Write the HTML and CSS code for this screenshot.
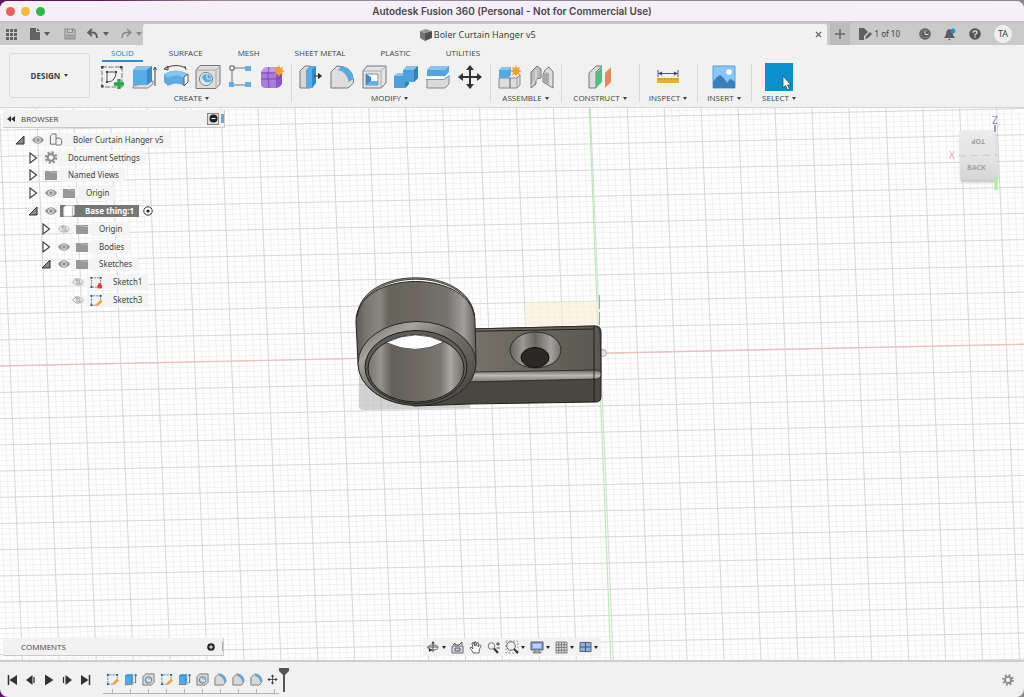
FILE: index.html
```html
<!DOCTYPE html>
<html lang="en">
<head>
<meta charset="utf-8">
<title>Autodesk Fusion 360</title>
<link rel="stylesheet" href="styles.css">
</head>
<body>
<svg class="sprite" aria-hidden="true">
  <symbol id="eye" viewBox="0 0 12 8"><path d="M0 4Q6-3.500 12 4Q6 11.500 0 4Z" fill="#969696"/><circle cx="6" cy="4" r="2.400" fill="none" stroke="#f4f4f4" stroke-width=".9"/></symbol>
  <symbol id="eye-off" viewBox="0 0 12 8"><path d="M.5 4Q6-2.500 11.500 4Q6 10.500 .5 4Z" fill="none" stroke="#a5a5a5" stroke-width=".9"/><circle cx="6" cy="4" r="2" fill="none" stroke="#a5a5a5" stroke-width=".9"/><path d="M2.500 .5L9 7.500M4 .2L10.500 7" stroke="#a5a5a5" stroke-width=".8"/></symbol>
  <symbol id="folder" viewBox="0 0 12 10"><path d="M0 1h5l1 1.500V1H12v9H0Z" fill="#989898"/><path d="M6 1.200l1 1.300h5" stroke="#c4c4c4" stroke-width=".7" fill="none"/></symbol>
  <symbol id="closed" viewBox="0 0 10 12"><path d="M2 1L8.500 6L2 11Z" fill="#fff" stroke="#444" stroke-width="1.200"/></symbol>
  <symbol id="open" viewBox="0 0 10 10"><path d="M9 1V9H1Z" fill="#888" stroke="#333" stroke-width="1"/></symbol>
  <symbol id="gear" viewBox="0 0 12 12"><circle cx="6" cy="6" r="4.800" fill="none" stroke="#8d8d8d" stroke-width="2" stroke-dasharray="1.900 1.870"/><circle cx="6" cy="6" r="3.100" fill="none" stroke="#8d8d8d" stroke-width="1.900"/></symbol>
  <symbol id="sketch" viewBox="0 0 14 14"><path d="M2 2H12V12H2Z" fill="none" stroke="#777" stroke-dasharray="2 1"/><path d="M1 1h2v2H1zM11 1h2v2h-2zM1 11h2v2H1z" fill="#356"/></symbol>
  <symbol id="sketch-pen" viewBox="0 0 14 14"><path d="M8 12H2V2H12V6" fill="none" stroke="#4d87b5" stroke-dasharray="2.500 1"/><path d="M1 1h2v2H1zM11 1h2v2h-2zM1 11h2v2H1z" fill="#356"/><path d="M7 13l1-3 4-4 2 2-4 4Z" fill="#eda142"/></symbol>
  <symbol id="t-extrude" viewBox="0 0 14 14"><path d="M1 3L3 1H10V10L8 12H1Z" fill="#58a8df"/><path d="M1 3H8V12" fill="none" stroke="#2e80b9" stroke-width=".7"/><path d="M1 12.500H9L11 10" stroke="#777" fill="none"/><path d="M12.500 2V11M11.300 3.200L12.500 1.200L13.700 3.200" stroke="#444" fill="none" stroke-width=".8"/></symbol>
  <symbol id="t-hole" viewBox="0 0 14 14"><path d="M1 4L4 1H13V10L10 13H1Z" fill="#d8d8d8" stroke="#777"/><circle cx="7" cy="7.500" r="3.500" fill="#a9cde6" stroke="#567" stroke-width=".8"/><path d="M5 6Q7 10 10 8.500" fill="none" stroke="#fff"/></symbol>
  <symbol id="t-fillet" viewBox="0 0 14 14"><path d="M1 13V5L5 1Q12 1 13 9L10 13Z" fill="#d9d9d9" stroke="#777"/><path d="M6 1.500Q12 2 13 9L11 10Q10.500 5 5 3Z" fill="#5ba9de"/></symbol>
  <symbol id="move" viewBox="0 0 26 26"><path d="M13 4V22M4 13H22" stroke="#333" stroke-width="2"/><path d="M13 1L17 6H9ZM13 25L17 20H9ZM1 13L6 9V17ZM25 13L20 9V17Z" fill="#333"/></symbol>
  <symbol id="star" viewBox="0 0 12 12"><path d="M6 0L7.200 3L10.200 1.800L9 4.800L12 6L9 7.200L10.200 10.200L7.200 9L6 12L4.800 9L1.800 10.200L3 7.200L0 6L3 4.800L1.800 1.800L4.800 3Z" fill="#f0a32c"/></symbol>
</svg>

<div class="window">
  <header class="titlebar">
    <div class="lights"><button class="light red" aria-label="Close"></button><button class="light amber" aria-label="Minimize"></button><button class="light green" aria-label="Zoom"></button></div>
    <h1 class="title">Autodesk Fusion 360 (Personal - Not for Commercial Use)</h1>
  </header>

  <div class="docbar">
    <div class="quick">
      <button class="q" aria-label="Data panel"><svg width="12" height="12" viewBox="0 0 12 12"><path d="M1 1h3v3H1zM5 1h3v3H5zM9 1h3v3H9zM1 5h3v3H1zM5 5h3v3H5zM9 5h3v3H9zM1 9h3v3H1zM5 9h3v3H5zM9 9h3v3H9z" fill="#626262"/></svg></button>
      <button class="q file" aria-label="File"><svg width="10" height="12" viewBox="0 0 10 12"><path d="M0 0H6V4H10V12H0ZM7 0L10 3H7Z" fill="#626262"/></svg><i class="caret"></i></button>
      <button class="q save" aria-label="Save"><svg width="12" height="12" viewBox="0 0 12 12"><path d="M1 1H9.500L11 2.500V11H1ZM3.500 1V4.500H8.500V1M3 11V7H9V11M5 7V11M7 7V11" fill="none" stroke="#8a8a8a" stroke-width="1.200"/></svg></button>
      <button class="q" aria-label="Undo"><svg width="12" height="12" viewBox="0 0 12 12"><path d="M5 1L1 4.500L5 8M1.500 4.500H6Q10 5 10 10" fill="none" stroke="#5e5e5e" stroke-width="1.800"/></svg><i class="caret"></i></button>
      <button class="q dim" aria-label="Redo"><svg width="12" height="12" viewBox="0 0 12 12"><path d="M7 1L11 4.500L7 8M10.500 4.500H6Q2 5 2 10" fill="none" stroke="#5e5e5e" stroke-width="1.400"/></svg><i class="caret"></i></button>
    </div>
    <div class="doctab">
      <svg width="12" height="12" viewBox="0 0 12 12"><path d="M0 2L6 0L12 2L5 4Z" fill="#999"/><path d="M0 2L5 4V12L0 9Z" fill="#777"/><path d="M5 4L12 2V9L5 12Z" fill="#505050"/></svg>
      <span>Boler Curtain Hanger v5</span>
      <button class="close" aria-label="Close document"><svg width="7" height="7" viewBox="0 0 7 7"><path d="M1 1L6 6M6 1L1 6" stroke="#666" stroke-width="1.200"/></svg></button>
    </div>
    <button class="plus" aria-label="New design"><svg width="10" height="10" viewBox="0 0 10 10"><path d="M5 0V10M0 5H10" stroke="#777" stroke-width="2"/></svg></button>
    <div class="account">
      <button class="count"><svg width="13" height="12" viewBox="0 0 13 12"><path d="M0 0H5L9 4L5 8V12H0Z" fill="#606060"/><path d="M6 11L7 8L11 4L13 6L9 10Z" fill="#606060"/></svg>1 of 10</button>
      <button class="q" aria-label="Job status"><svg width="12" height="12" viewBox="0 0 12 12"><circle cx="6" cy="6" r="5.800" fill="#5c5c5c"/><circle cx="6" cy="6" r="4" fill="none" stroke="#999" stroke-width=".6"/><path d="M6 3V6.500H9" stroke="#ddd" fill="none"/></svg></button>
      <button class="q" aria-label="Notifications"><svg width="12" height="13" viewBox="0 0 12 13"><path d="M5 1Q9 2 9 7L11 10H0L2 7Q2 2 5 1ZM4 11H7L5.500 12.500Z" fill="#5c5c5c"/><circle cx="9" cy="3" r="2.400" fill="#2292c8"/></svg></button>
      <button class="q" aria-label="Help"><svg width="12" height="12" viewBox="0 0 12 12"><circle cx="6" cy="6" r="5.800" fill="#565656"/><path d="M4 4.800Q4 2.800 6 2.800T8 4.600Q8 5.500 6.800 6Q6 6.500 6 7.400M6 8.300V9.500" stroke="#e4e4e4" stroke-width="1.300" fill="none"/></svg></button>
      <button class="avatar">TA</button>
    </div>
  </div>

  <div class="ribbon">
    <button class="workspace">DESIGN <i class="caret"></i></button>
    <div class="tools">
      <nav class="tabs">
        <button class="tab active">SOLID</button><button class="tab">SURFACE</button><button class="tab">MESH</button><button class="tab">SHEET METAL</button><button class="tab">PLASTIC</button><button class="tab">UTILITIES</button>
      </nav>
      <div class="groups">
        <section class="group create">
          <div class="icons">
            <button class="tool" aria-label="Create sketch"><svg viewBox="0 0 26 26"><path d="M3 3H23V23H3Z" fill="none" stroke="#555" stroke-dasharray="5 1.500" stroke-width=".8"/><path d="M8 8H17Q17 17 9 18H8Z" fill="none" stroke="#555" stroke-width="1"/><path d="M2 2h2.500v2.500H2zM21 2h2.500v2.500H21zM2 21h2.500v2.500H2zM7 7h2v2H7zM16 7h2v2h-2zM7 17h2v2H7z" fill="#444"/><path d="M20 15V25M15 20H25" stroke="#2ba44f" stroke-width="3.400"/></svg></button>
            <button class="tool" aria-label="Extrude"><svg viewBox="0 0 26 26"><path d="M2 22V24H17L22 20V17Z" fill="#ddd" stroke="#888"/><path d="M2 6L6 2H21V17L16 21H2Z" fill="#5babe4"/><path d="M2 6L6 2H21L16 6Z" fill="#86c3ed"/><path d="M16 6L21 2V17L16 21Z" fill="#3e8dc8"/><path d="M24 4V22M22.500 6L24 3L25.500 6" fill="none" stroke="#444"/></svg></button>
            <button class="tool" aria-label="Revolve"><svg viewBox="0 0 26 26"><path d="M1 10Q13 3 25 10L22 22Q13 17 5 22L1 18Z" fill="#5dabe2"/><path d="M1 10Q13 3 25 10L22 14Q13 9 5 14Z" fill="#87c5ee"/><path d="M21 13L25 10V18L21 22Z" fill="#fff" stroke="#555"/><path d="M3 4Q13-1 23 4M1 5L5 2V6ZM23 6L22 2" fill="none" stroke="#444"/></svg></button>
            <button class="tool" aria-label="Hole"><svg viewBox="0 0 26 26"><path d="M1 6L5 1.500H25V20L21 24.500H1Z" fill="#dedede" stroke="#777"/><path d="M1 6H21V24M21 6L25 2" fill="none" stroke="#aaa"/><circle cx="11" cy="15" r="6.500" fill="#f5f5f5" stroke="#777"/><circle cx="11.500" cy="15" r="5" fill="#5ca8dc"/><path d="M7 13Q10 21 16 17L15 19Q10 22 7 18Z" fill="#d4eaf8"/><path d="M12 10V15H16" fill="none" stroke="#cde5f5"/></svg></button>
            <button class="tool" aria-label="Pattern"><svg viewBox="0 0 26 26"><path d="M5 6V19M7 4H19M7 21H19" stroke="#666" stroke-width=".9"/><path d="M3 2h4v4H3z" fill="#fff" stroke="#555"/><path d="M18 2h6v5h-6zM2 18h5v5H2zM18 18h6v5h-6z" fill="#65aede"/></svg></button>
            <button class="tool" aria-label="Create form"><svg viewBox="0 0 26 26"><path d="M2 9Q3 4 8 3H19Q23 5 23 9V19Q22 23 17 24H7Q3 24 2 21Z" fill="#a97bdc"/><path d="M2 9Q3 4 8 3H19L16 8H4Z" fill="#c19ae9"/><path d="M17 8Q23 6 23 9V19Q22 23 17 24Z" fill="#8756c0"/><path d="M10 3Q8 8 10 24M2 15H17L23 12M2 9H17" stroke="#6f42a5" fill="none" stroke-width=".8"/><use href="#star" x="14" y="1" width="12" height="12"/></svg></button>
          </div>
          <button class="glabel">CREATE <i class="caret"></i></button>
        </section>
        <section class="group modify">
          <div class="icons">
            <button class="tool" aria-label="Press pull"><svg viewBox="0 0 26 26"><path d="M3 7L8 2H13V24H3Z" fill="#d9d9d9" stroke="#777"/><path d="M9 6L13 2H19V19L15 24H9Z" fill="#5babe3"/><path d="M15 6L19 2V19L15 24Z" fill="#378ac6"/><path d="M17 12H23M21.500 9.500L24.500 12L21.500 14.500Z" stroke="#333" fill="#333"/></svg></button>
            <button class="tool" aria-label="Fillet"><svg viewBox="0 0 26 26"><path d="M2 24V8L8 2Q23 2 24.500 16V19L19 24Z" fill="#dedede" stroke="#777"/><path d="M12 2.500Q23 3 24.500 15L19.500 18Q18 8 9 6Z" fill="#5baae2"/></svg></button>
            <button class="tool" aria-label="Shell"><svg viewBox="0 0 26 26"><path d="M2 7L6 2H25V19L20 24H2Z" fill="#e5e5e5" stroke="#777"/><path d="M2 7H20V24M20 7L25 2" stroke="#aaa" fill="none"/><path d="M5 10H17V21H5Z" fill="#fff" stroke="#888"/><path d="M5 10L10 13V18L5 21Z" fill="#3f8cc8"/><path d="M10 17H17V21H5Z" fill="#65b2e6"/></svg></button>
            <button class="tool" aria-label="Combine"><svg viewBox="0 0 26 26"><path d="M1 12L5 9H10V6L14 2H25V14L21 18H16V20L12 24H1Z" fill="#4f9fd9"/><path d="M10 6L14 2H25L21 6ZM1 12L5 9H10V12Z" fill="#86c4ee"/><path d="M21 6L25 2V14L21 18ZM12 18H16V20L12 24Z" fill="#347fb9"/></svg></button>
            <button class="tool" aria-label="Split body"><svg viewBox="0 0 26 26"><path d="M2 15H20L24 12V20L20 24H2Z" fill="#dadada" stroke="#888"/><path d="M2 6L6 2H24V8L20 12H2Z" fill="#54a4df"/><path d="M2 6L6 2H24L20 6Z" fill="#87c4ee"/><path d="M1 14.500H19L25 10" fill="none" stroke="#fff" stroke-width="2"/><path d="M1 15.500H19L25 11" fill="none" stroke="#6ba4ca"/></svg></button>
            <button class="tool" aria-label="Move"><svg viewBox="0 0 26 26"><use href="#move"/></svg></button>
          </div>
          <button class="glabel">MODIFY <i class="caret"></i></button>
        </section>
        <section class="group assemble">
          <div class="icons">
            <button class="tool" aria-label="New component"><svg viewBox="0 0 26 26"><path d="M2 14H13V24H2ZM13 14H20L23 11V21L20 24H13Z" fill="#ddd" stroke="#888"/><path d="M20 14V24" stroke="#999"/><path d="M2 6L5 3H14V11L12 14H2Z" fill="#58a8e2"/><path d="M2 6L5 3H14L12 6Z" fill="#89c6ef"/><use href="#star" x="13" y="1" width="12" height="12"/></svg></button>
            <button class="tool" aria-label="Joint"><svg viewBox="0 0 26 26"><path d="M2 8L8 2L12 5V14L7 15V20L2 24Z" fill="#bbb" stroke="#777"/><path d="M7 6V15L2 22" fill="none" stroke="#eee"/><path d="M14 11L16 6L20 3L24 8V24L19 21L14 18Z" fill="#ddd" stroke="#777"/><path d="M14 11L18 8L20 10V20L14 18Z" fill="#a9a9a9"/></svg></button>
          </div>
          <button class="glabel">ASSEMBLE <i class="caret"></i></button>
        </section>
        <section class="group construct">
          <div class="icons"><button class="tool" aria-label="Offset plane"><svg viewBox="0 0 26 26"><path d="M2 9L9 2H15L9 8V24H2Z" fill="#ddd" stroke="#777"/><path d="M9 9L15 3V18L9 24Z" fill="#4fbf7b"/><path d="M18 9L24 3V18L18 24Z" fill="#e28a5b"/></svg></button></div>
          <button class="glabel">CONSTRUCT <i class="caret"></i></button>
        </section>
        <section class="group inspect">
          <div class="icons"><button class="tool" aria-label="Measure"><svg viewBox="0 0 26 26"><path d="M3 6V13M23 6V13M5 9.500H21" stroke="#555"/><path d="M3 9.500L7 7.500V11.500ZM23 9.500L19 7.500V11.500Z" fill="#444"/><path d="M2 14H24V19H2Z" fill="#eab034"/><path d="M4 14V16M7 14V16M10 14V16M13 14V16M16 14V16M19 14V16M22 14V16" stroke="#a37d26" stroke-width=".8"/></svg></button></div>
          <button class="glabel">INSPECT <i class="caret"></i></button>
        </section>
        <section class="group insert">
          <div class="icons"><button class="tool" aria-label="Insert image"><svg viewBox="0 0 26 26"><path d="M2 2H24V24H2Z" fill="#8ac8f3" stroke="#5b9fce"/><circle cx="18" cy="8" r="2.800" fill="#fff"/><path d="M2 18Q6 12 9 11Q13 13 16 19Q18 15 20 15L24 18V24H2Z" fill="#397fb9"/></svg></button></div>
          <button class="glabel">INSERT <i class="caret"></i></button>
        </section>
        <section class="group select">
          <div class="icons"><button class="tool picked" aria-label="Select"><svg viewBox="0 0 28 28"><path d="M18 13V25L20.500 22.500L22.500 27L24.500 26L22.500 22H26Z" fill="#fff" stroke="#345" stroke-width=".8"/></svg></button></div>
          <button class="glabel">SELECT <i class="caret"></i></button>
        </section>
      </div>
    </div>
  </div>

  <main class="viewport">
    <svg class="scene" viewBox="0 108 1024 552" preserveAspectRatio="xMidYMid slice" role="img" aria-label="3D view of the curtain hanger">
      <defs>
        <pattern id="minor" width="7.380" height="5.240" patternUnits="userSpaceOnUse" patternTransform="matrix(1 -.0212 .0415 1 600 353)"><path d="M0 0H7.380M0 0V5.240" stroke="#e6e6e6" stroke-width="1" fill="none"/></pattern>
        <pattern id="major" width="36.900" height="26.200" patternUnits="userSpaceOnUse" patternTransform="matrix(1 -.0212 .0415 1 600 353)"><path d="M0 0H36.900M0 0V26.200" stroke="#cfcfcf" stroke-width="1.400" fill="none"/></pattern>
        <linearGradient id="outer"><stop offset="0" stop-color="#5d5b56"/><stop offset=".08" stop-color="#77756f"/><stop offset=".2" stop-color="#8a8780"/><stop offset=".27" stop-color="#67645c"/><stop offset=".5" stop-color="#6c6860"/><stop offset=".76" stop-color="#75736d"/><stop offset=".9" stop-color="#a09f9b"/><stop offset="1" stop-color="#63615c"/></linearGradient>
        <linearGradient id="inner"><stop offset="0" stop-color="#76746e"/><stop offset=".13" stop-color="#96948e"/><stop offset=".25" stop-color="#625f59"/><stop offset=".55" stop-color="#6f6b63"/><stop offset=".76" stop-color="#7b7871"/><stop offset=".86" stop-color="#aaa8a3"/><stop offset="1" stop-color="#6c6a64"/></linearGradient>
        <linearGradient id="rim" x2="1" y2="1"><stop offset="0" stop-color="#6b6963"/><stop offset=".25" stop-color="#a5a39d"/><stop offset=".45" stop-color="#75736d"/><stop offset="1" stop-color="#3e3d39"/></linearGradient>
        <linearGradient id="top"><stop offset="0" stop-color="#77736a"/><stop offset="1" stop-color="#5a5750"/></linearGradient>
        <linearGradient id="edge" x2="0" y2="1"><stop offset="0" stop-color="#65625b"/><stop offset=".45" stop-color="#bbb9b3"/><stop offset="1" stop-color="#77756e"/></linearGradient>
        <linearGradient id="sink"><stop offset="0" stop-color="#66635d"/><stop offset=".25" stop-color="#9a9893"/><stop offset=".5" stop-color="#69665f"/><stop offset=".8" stop-color="#a3a19d"/><stop offset="1" stop-color="#77746d"/></linearGradient>
        <linearGradient id="cube" x2="0" y2="1"><stop offset="0" stop-color="#ececec"/><stop offset=".5" stop-color="#e5e5e6"/><stop offset="1" stop-color="#d6d6d7"/></linearGradient>
        <filter id="soft" x="-20%" y="-20%" width="140%" height="150%"><feGaussianBlur stdDeviation="1.500"/></filter>
      </defs>
      <rect x="-600" y="-400" width="2300" height="1600" fill="#fefefe"/>
      <rect x="-600" y="-400" width="2300" height="1600" fill="url(#minor)"/>
      <rect x="-600" y="-400" width="2300" height="1600" fill="url(#major)"/>
      <path d="M-600 378.700L1624 331.300" stroke="#f2bcbc" stroke-width="1.100"/>
      <path d="M588.500 88L612 690" stroke="#b0edb0" stroke-width="1.100"/>
      <path d="M525 302L600 301V326H525Z" fill="#fbecd6" opacity=".6"/>
      <path d="M599.500 295V325" stroke="#7fb0c8" stroke-width="1.100" stroke-dasharray="14 3"/>
      <path d="M359 370V406Q359 410 364 410L470 408V385Z" fill="#a8a8a8" opacity=".5"/>
      <circle cx="603" cy="353" r="3.500" fill="#e4e4e4" stroke="#aaa"/>
      <path d="M470 329L595 326Q601 326 601 332V397Q601 402 596 402L470 404L414 406L380 390Z" fill="#494741" stroke="#23221f"/>
      <path d="M470 329L595 326Q600 327 600 333L601 372L465 382Z" fill="url(#top)" stroke="#2a2926" stroke-width=".8"/>
      <path d="M473 372L596 370Q601 370 601 374Q601 379 596 379L466 382Z" fill="url(#edge)" stroke="#25241f" stroke-width=".8"/>
      <path d="M594 326V402M465 331.500L594 329" fill="none" stroke="#1d1c1a" stroke-width=".9"/>
      <ellipse cx="535.500" cy="350" rx="25.500" ry="18" fill="url(#sink)" stroke="#2c2b27"/>
      <ellipse cx="535" cy="357.500" rx="14" ry="10" fill="#2b2925" stroke="#11100f"/>
      <path d="M356 322C356 268 475 268 475 322L476 358C477 420 360 420 358 362Z" fill="url(#outer)" stroke="#252420"/>
      <path d="M357 316C362 265 469 265 474.500 316C466 267 366 267 357 316Z" fill="#8f8d87" stroke="#252420" stroke-width=".8"/>
      <ellipse cx="417" cy="363.500" rx="59" ry="42" fill="url(#rim)" stroke="#292824"/>
      <ellipse cx="416" cy="367" rx="51" ry="36.500" fill="#5e5c56" stroke="#1f1e1b"/>
      <ellipse cx="416" cy="368.500" rx="48" ry="33.500" fill="url(#inner)" stroke="#1f1e1b"/>
      <path d="M386 342.500Q416 327.500 444 342Q416 356.500 386 342.500Z" fill="#fefefe" stroke="#333" stroke-width=".8"/>
      <path d="M960 134H996L998 182H961Z" fill="#888" opacity=".5" filter="url(#soft)"/>
      <path d="M959 131L995 130L998 178Q997 180 994 180H963Q960 180 960 177Z" fill="url(#cube)"/>
      <path d="M959 156L998 155" stroke="#c4cbd6" stroke-dasharray="7 5"/>
      <path d="M995 125V132" stroke="#7979dd" stroke-width="1.500"/>
      <path d="M996 177V190" stroke="#a4f2a4" stroke-width="3"/>
      <text class="axis" x="992" y="124" fill="#8282df">Z</text>
      <text class="axis" x="949" y="159" fill="#f09a9a">X</text>
      <text class="face" x="-985" y="-139" transform="rotate(180)">TOP</text>
      <text class="face" x="967" y="170">BACK</text>
    </svg>

    <aside class="browser">
      <div class="panel">
        <svg width="8" height="6" viewBox="0 0 8 6"><path d="M4 0V6L0 3ZM8 0V6L4 3Z" fill="#333"/></svg>
        <h2>BROWSER</h2>
        <button class="boxed" aria-label="Collapse panel"><svg width="9" height="9" viewBox="0 0 9 9"><circle cx="4.500" cy="4.500" r="4" fill="#222"/><path d="M2.500 4.500H6.500" stroke="#fff" stroke-width="1.200"/></svg></button>
        <i class="grip blue"></i>
      </div>
      <ul class="tree">
        <li class="row l0"><svg class="c a"><use href="#open"/></svg><svg class="c e"><use href="#eye"/></svg><svg class="c i" viewBox="0 0 14 14"><path d="M1 3L3 1H7V12H1ZM7 6Q12 4 13 8V12L11 13H7" fill="#f5f5f5" stroke="#666"/></svg><span>Boler Curtain Hanger v5</span></li>
        <li class="row l1"><svg class="c a"><use href="#closed"/></svg><svg class="c i"><use href="#gear"/></svg><span>Document Settings</span></li>
        <li class="row l1"><svg class="c a"><use href="#closed"/></svg><svg class="c f"><use href="#folder"/></svg><span>Named Views</span></li>
        <li class="row l1"><svg class="c a"><use href="#closed"/></svg><svg class="c e"><use href="#eye"/></svg><svg class="c f"><use href="#folder"/></svg><span>Origin</span></li>
        <li class="row l1 current"><svg class="c a"><use href="#open"/></svg><svg class="c e"><use href="#eye"/></svg><svg class="c i" viewBox="0 0 14 14"><path d="M1 3L3 1H13V11L11 13H1Z" fill="#fff" stroke="#ddd"/><path d="M11 3V13M11 3L13 1" stroke="#aaa" fill="none"/></svg><span>Base thing:1</span><svg class="radio" viewBox="0 0 10 10"><circle cx="5" cy="5" r="4.200" fill="#fff" stroke="#333"/><circle cx="5" cy="5" r="1.600" fill="#222"/></svg></li>
        <li class="row l2"><svg class="c a"><use href="#closed"/></svg><svg class="c e"><use href="#eye-off"/></svg><svg class="c f"><use href="#folder"/></svg><span>Origin</span></li>
        <li class="row l2"><svg class="c a"><use href="#closed"/></svg><svg class="c e"><use href="#eye"/></svg><svg class="c f"><use href="#folder"/></svg><span>Bodies</span></li>
        <li class="row l2"><svg class="c a"><use href="#open"/></svg><svg class="c e"><use href="#eye"/></svg><svg class="c f"><use href="#folder"/></svg><span>Sketches</span></li>
        <li class="row l3"><svg class="c e"><use href="#eye-off"/></svg><svg class="c i" viewBox="0 0 14 14"><use href="#sketch"/><path d="M9 10h4v3H9zM10 10V8h2v2" fill="#e04848" stroke="#d33" stroke-width=".8"/></svg><span>Sketch1</span></li>
        <li class="row l3"><svg class="c e"><use href="#eye-off"/></svg><svg class="c i"><use href="#sketch-pen"/></svg><span>Sketch3</span></li>
      </ul>
    </aside>

    <div class="foot">
      <div class="panel comments"><h2>COMMENTS</h2><button class="bare" aria-label="Add comment"><svg width="8" height="8" viewBox="0 0 8 8"><circle cx="4" cy="4" r="3.800" fill="#222"/><path d="M4 2V6M2 4H6" stroke="#fff"/></svg></button><i class="grip"></i></div>
      <div class="navbar">
        <button class="nav" aria-label="Orbit"><svg width="14" height="14" viewBox="0 0 14 14"><path d="M7 2V12M1 7H12" stroke="#555"/><ellipse cx="7" cy="7.500" rx="5" ry="2.500" fill="none" stroke="#666"/><path d="M7 1L8.500 3.500H5.500ZM3 8L6.500 10L3 12Z" fill="#333"/></svg><i class="caret"></i></button>
        <button class="nav" aria-label="Look at"><svg width="13" height="13" viewBox="0 0 13 13"><path d="M1 5H12V12H1Z" fill="#ddd" stroke="#666"/><path d="M4 7H9V10H4Z" fill="#cce" stroke="#557"/><path d="M2 4L4 2V4H8L11 1V4" fill="none" stroke="#555"/></svg></button>
        <button class="nav" aria-label="Pan"><svg width="13" height="13" viewBox="0 0 13 13"><path d="M4 12Q3 9 1 7L2 6L4 8L3 2L4.500 1.500L5.500 5V1H7V5L8 1.500L9.500 2L9 6L11 3.500L12 4.500Q10 8 10 12Z" fill="#fff" stroke="#555" stroke-width=".9"/></svg></button>
        <button class="nav" aria-label="Zoom"><svg width="13" height="13" viewBox="0 0 13 13"><circle cx="4.500" cy="5" r="3.300" fill="#eee" stroke="#777"/><path d="M7 7.500L11 12" stroke="#333" stroke-width="2"/><path d="M11 1V5M9 3H13M9.500 7H13" stroke="#444"/></svg></button>
        <button class="nav" aria-label="Fit"><svg width="14" height="14" viewBox="0 0 14 14"><path d="M1 1H13V13H1Z" fill="none" stroke="#999" stroke-dasharray="2 1.500"/><circle cx="6" cy="6" r="4.300" fill="#eef0f2" stroke="#666"/><path d="M9 9L13 13" stroke="#333" stroke-width="2"/></svg><i class="caret"></i></button>
        <button class="nav" aria-label="Display settings"><svg width="14" height="13" viewBox="0 0 14 13"><path d="M1 1H13V9H1Z" fill="#83a9e0" stroke="#556"/><path d="M3 3H11V7H3Z" fill="#bdd3f3"/><path d="M5 9V11H3V12H11V11H9V9" fill="#aaa" stroke="#666" stroke-width=".7"/></svg><i class="caret"></i></button>
        <button class="nav" aria-label="Grid"><svg width="13" height="13" viewBox="0 0 13 13"><path d="M1 1H12V12H1Z" fill="#ddd"/><path d="M1 1H12V12H1ZM1 3.750H12M1 6.500H12M1 9.250H12M3.750 1V12M6.500 1V12M9.250 1V12" fill="none" stroke="#777" stroke-width=".9"/></svg><i class="caret"></i></button>
        <button class="nav" aria-label="Viewports"><svg width="13" height="12" viewBox="0 0 13 12"><path d="M1 1.500H12V10.500H1Z" fill="#8fb4e4" stroke="#567"/><path d="M6.500 1V11M1 6H12" stroke="#456"/></svg><i class="caret"></i></button>
      </div>
    </div>
  </main>

  <footer class="timeline">
    <div class="play">
      <button aria-label="Go to start"><svg width="12" height="12" viewBox="0 0 12 12"><path d="M1.500 1V11" stroke="#333" stroke-width="1.500"/><path d="M10 1V11L2.500 6Z" fill="#333"/></svg></button>
      <button aria-label="Step back"><svg width="12" height="12" viewBox="0 0 12 12"><path d="M7.500 1V11L1 6Z" fill="#333"/><path d="M9 3V9" stroke="#333" stroke-width="1.300"/></svg></button>
      <button aria-label="Play"><svg width="12" height="12" viewBox="0 0 12 12"><path d="M2 .5V11.500L10.500 6Z" fill="#333"/></svg></button>
      <button aria-label="Step forward"><svg width="12" height="12" viewBox="0 0 12 12"><path d="M4.500 1V11L11 6Z" fill="#333"/><path d="M2.500 3V9" stroke="#333" stroke-width="1.300"/></svg></button>
      <button aria-label="Go to end"><svg width="12" height="12" viewBox="0 0 12 12"><path d="M10.500 1V11" stroke="#333" stroke-width="1.500"/><path d="M2 1V11L9.500 6Z" fill="#333"/></svg></button>
    </div>
    <div class="steps">
      <button aria-label="Sketch 1"><svg><use href="#sketch-pen"/></svg></button><button aria-label="Extrude 1"><svg><use href="#t-extrude"/></svg></button><button aria-label="Hole 1"><svg><use href="#t-hole"/></svg></button><button aria-label="Sketch 3"><svg><use href="#sketch-pen"/></svg></button><button aria-label="Extrude 2"><svg><use href="#t-extrude"/></svg></button><button aria-label="Hole 2"><svg><use href="#t-hole"/></svg></button><button aria-label="Fillet 1"><svg><use href="#t-fillet"/></svg></button><button aria-label="Fillet 2"><svg><use href="#t-fillet"/></svg></button><button aria-label="Fillet 3"><svg><use href="#t-fillet"/></svg></button><button aria-label="Move 1"><svg><use href="#move"/></svg></button>
    </div>
    <svg class="marker" width="10" height="24" viewBox="0 0 10 24"><path d="M0 0H10V3L6 7V24H4V7L0 3Z" fill="#555"/></svg>
    <button class="settings" aria-label="Timeline settings"><svg width="12" height="12"><use href="#gear"/></svg></button>
  </footer>
</div>
</body>
</html>
```
FILE: styles.css
```css
* { box-sizing: border-box; }
html, body { height: 100%; }
body { margin: 0; padding-top: 1px; background: linear-gradient(to right, #65145f 0, #5b1a58 100px, #9a8a9c 220px, #8d8490 100%); font-family: "Noto Sans", "Open Sans", sans-serif; font-size: 8px; line-height: 12px; color: #3f3f3f; }
button { border: 0; padding: 0; margin: 0; background: none; font: inherit; color: inherit; display: flex; align-items: center; justify-content: center; }
h1, h2, ul { margin: 0; padding: 0; font: inherit; list-style: none; }
svg { display: block; flex: none; }
.sprite { position: absolute; width: 0; height: 0; }
.window { height: 100%; display: flex; flex-direction: column; background: #f1f1f1; border-radius: 8px; overflow: hidden; }

.titlebar { height: 20px; flex: none; display: grid; grid-template-columns: 1fr auto 1fr; align-items: center; background: #f5f0f7; }
.lights { display: flex; gap: 6px; padding-left: 6px; }
.light { width: 9px; height: 9px; border-radius: 50%; }
.red { background: #ec6059; }
.amber { background: #f3b93f; }
.green { background: #30b94a; }
.title { font: 600 10px/12px Inter, sans-serif; color: #4a454c; }

.docbar { height: 24px; flex: none; display: flex; background: #cacaca; border-top: 2px solid #c0c0c0; }
.quick { width: 143px; flex: none; display: flex; align-items: center; padding-left: 5px; gap: 11px; }
.q { gap: 4px; }
.file { margin-left: 2px; }
.save { margin-left: 3px; }
.dim { opacity: .6; }
.caret { width: 0; height: 0; border: 2px solid transparent; border-top: 3px solid currentColor; border-bottom: 0; flex: none; }
.quick .caret { border-width: 3px 3px 0; border-top-width: 4px; color: #5e5e5e; }
.doctab { flex: 1; display: grid; grid-template-columns: 1fr auto 1fr; align-items: center; column-gap: 2px; background: #f1f1f1; font-size: 9px; border-top-left-radius: 3px; border-top-right-radius: 3px; margin-top: 1px; }
.doctab > svg, .doctab .close { justify-self: end; }
.close { margin-right: 5px; }
.plus { width: 20px; margin-left: 3px; background: #bcbcbc; }
.account { display: flex; align-items: center; gap: 13px; padding: 0 12px 0 9px; }
.count { gap: 3px; margin-right: 6px; font-size: 8px; }
.avatar { width: 18px; height: 18px; border-radius: 50%; background: #efefef; font-size: 9px; }

.ribbon { height: 63px; flex: none; display: flex; border-bottom: 1px solid #d6d6d6; padding-left: 9px; font-family: "Open Sans", "Noto Sans", sans-serif; }
.workspace { width: 81px; height: 45px; margin-top: 8px; border: 1px solid #d9d9d9; border-radius: 3px; font-weight: 700; gap: 4px; }
.tools { margin-left: 8px; display: flex; flex-direction: column; }
.tabs { display: flex; gap: 17px; height: 17px; padding-left: 4px; }
.tab { padding: 0 9px; border-bottom: 2px solid transparent; }
.active { color: #1683be; border-color: #2e92ca; }
.groups { display: flex; }
.group { display: flex; flex-direction: column; align-items: center; position: relative; }
.group + .group::before { content: ""; position: absolute; left: 0; top: 2px; height: 38px; border-left: 1px solid #d8d8d8; }
.icons { display: flex; align-items: center; gap: 6px; height: 29px; }
.tool, .tool svg { width: 26px; height: 26px; }
.glabel { gap: 3px; height: 14px; }
.create { width: 193px; padding-right: 6px; }
.modify { width: 199px; padding-right: 2px; }
.assemble { width: 71px; }
.construct { width: 78px; }
.inspect { width: 58px; }
.insert { width: 54px; }
.select { width: 56px; }
.picked, .picked svg { width: 28px; height: 28px; }
.picked { background: #0c90cb; }

.viewport { flex: 1; min-height: 0; position: relative; isolation: isolate; display: flex; flex-direction: column; justify-content: space-between; padding: 2px 3px 4px; }
.scene { position: absolute; inset: 0; width: 100%; height: 100%; z-index: -1; }
.axis { font: 10px "Open Sans", sans-serif; }
.face { font: 700 7px "Open Sans", sans-serif; fill: #a2a2a6; }
.browser { width: 222px; }
.panel { height: 18px; display: flex; align-items: center; background: #f2f2f2; border-bottom: 1px solid #c9c9c9; border-right: 1px solid #ccc; padding-left: 4px; }
.panel h2 { flex: 1; padding-left: 6px; font-family: "Open Sans", "Noto Sans", sans-serif; }
.boxed { width: 12px; height: 12px; border: 1px solid #888; background: #ddd; }
.grip { width: 3px; height: 9px; margin-left: 2px; border-right: 1px solid #aaa; }
.blue { background: #76a6c5; border: 0; }
.tree { height: 178px; margin-top: 3px; display: flex; flex-direction: column; }
.row { flex: 1; display: flex; align-items: center; }
.l0 { padding-left: 8px; }
.l1 { padding-left: 21px; }
.l2 { padding-left: 34px; }
.l3 { padding-left: 48px; }
.c { width: 18px; }
.a { height: 12px; }
.row .a { padding: 0 4px; }
.e { height: 8px; background: #f6f6f6; }
.f { height: 10px; }
.i { height: 13px; }
.l3 .e { margin-left: 18px; }
.row span { background: #f4f4f4; padding: 1px 6px 1px 8px; }
.row .f, .row .i { background: #f4f4f4; }
.current .i, .current span { background: #777; color: #fff; font-weight: 700; }
.current .i { height: 12px; }
.current span { padding: 0 5px 0 7px; }
.radio { width: 10px; height: 10px; margin-left: 4px; }
.foot { display: grid; grid-template-columns: 221px 1fr 221px; align-items: center; }
.comments { padding-left: 12px; }
.bare { padding-right: 3px; }
.navbar { justify-self: center; display: flex; align-items: center; gap: 5px; background: #f2f2f2; padding: 2px 3px; }
.nav { gap: 2px; }
.nav .caret { color: #222; }

.timeline { height: 37px; flex: none; display: flex; align-items: center; border-top: 2px solid #cfcfcf; padding-left: 7px; }
.play { display: flex; gap: 6px; }
.steps { display: flex; margin-left: 12px; padding-top: 8px; border-bottom: 1px solid #b5b5b5; }
.steps button { width: 18px; height: 20px; position: relative; align-items: flex-start; }
.steps button:last-child { width: 14px; }
.steps button::after { content: ""; position: absolute; bottom: 0; left: 9px; height: 4px; border-left: 1px solid #b5b5b5; }
.steps svg { width: 13px; height: 13px; }
.steps button:last-child svg { width: 11px; }
.settings { margin: 0 10px 0 auto; }
```
